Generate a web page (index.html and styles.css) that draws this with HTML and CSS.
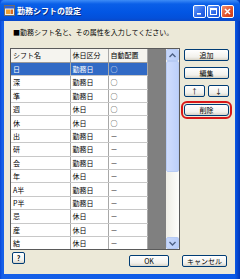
FILE: index.html
```html
<!DOCTYPE html>
<html lang="ja">
<head>
  <meta charset="UTF-8" />
  <title>勤務シフトの設定</title>
  <link rel="stylesheet" href="styles.css">
</head>
<body>
  <div class="window">
    <div class="titlebar">
      <svg class="app-icon" width="11" height="11" viewBox="0 0 11 11">
        <rect x="0.5" y="0.5" width="10" height="10" fill="#f4f1e4" stroke="#6b6b6b"/>
        <rect x="1" y="1" width="9" height="2.5" fill="#2d62d8"/>
        <rect x="2" y="4.5" width="4" height="4.5" fill="#f0a030"/>
        <rect x="6.5" y="4.5" width="2.5" height="4.5" fill="#d86a20"/>
      </svg>
      <span class="title">勤務シフトの設定</span>
      <div class="caption-btns">
        <span class="cap-btn"><svg width="11" height="11" viewBox="0 0 11 11"><rect x="3" y="7" width="4" height="1.6" fill="#fff"/></svg></span>
        <span class="cap-btn"><svg width="11" height="11" viewBox="0 0 11 11"><rect x="2.5" y="2.5" width="6" height="6" fill="none" stroke="#fff" stroke-width="1"/><rect x="2.5" y="2.5" width="6" height="1.6" fill="#fff"/></svg></span>
        <span class="cap-btn close"><svg width="11" height="11" viewBox="0 0 11 11"><path d="M3 3 L8 8 M8 3 L3 8" stroke="#fff" stroke-width="1.5"/></svg></span>
      </div>
    </div>

    <div class="body">
      <p class="prompt">■勤務シフト名と、その属性を入力してください。</p>

      <div class="main">
        <div class="grid">
          <div class="cells">
            <table class="shifts">
              <thead>
                <tr><th class="c1">シフト名</th><th class="c2">休日区分</th><th class="c3">自動配置</th></tr>
              </thead>
              <tbody>
                <tr class="selected"><td>日</td><td>勤務日</td><td>○</td></tr>
                <tr><td>深</td><td>勤務日</td><td>○</td></tr>
                <tr><td>準</td><td>勤務日</td><td>○</td></tr>
                <tr><td>週</td><td>休日</td><td>○</td></tr>
                <tr><td>休</td><td>休日</td><td>○</td></tr>
                <tr><td>出</td><td>勤務日</td><td>－</td></tr>
                <tr><td>研</td><td>勤務日</td><td>－</td></tr>
                <tr><td>会</td><td>勤務日</td><td>－</td></tr>
                <tr><td>年</td><td>休日</td><td>－</td></tr>
                <tr><td>A半</td><td>勤務日</td><td>－</td></tr>
                <tr><td>P半</td><td>勤務日</td><td>－</td></tr>
                <tr><td>忌</td><td>休日</td><td>－</td></tr>
                <tr><td>産</td><td>休日</td><td>－</td></tr>
                <tr><td>結</td><td>休日</td><td>－</td></tr>
              </tbody>
            </table>
          </div>
          <div class="scrollbar">
            <span class="sb-btn"><svg width="7" height="5" viewBox="0 0 7 5"><path d="M0.5 4 L3.5 1 L6.5 4" fill="none" stroke="#4d6185" stroke-width="1.4"/></svg></span>
            <span class="sb-thumb"></span>
            <span class="sb-track"></span>
            <span class="sb-btn"><svg width="7" height="5" viewBox="0 0 7 5"><path d="M0.5 1 L3.5 4 L6.5 1" fill="none" stroke="#4d6185" stroke-width="1.4"/></svg></span>
          </div>
        </div>

        <div class="side">
          <button type="button" class="btn">追加</button>
          <button type="button" class="btn">編集</button>
          <div class="arrows">
            <button type="button" class="btn small">↑</button>
            <button type="button" class="btn small">↓</button>
          </div>
          <button type="button" class="btn marked">削除</button>
        </div>
      </div>

      <div class="footer">
        <button type="button" class="btn help">?</button>
        <div class="actions">
          <button type="button" class="btn ok">OK</button>
          <button type="button" class="btn cancel">キャンセル</button>
        </div>
      </div>
    </div>
  </div>
</body>
</html>
```

FILE: styles.css
```css
body {
  margin: 0;
  font-family: "Noto Sans CJK JP", "Noto Sans", sans-serif;
  background: #fff;
}

.window {
  width: 240px;
  height: 279px;
  display: flex;
  flex-direction: column;
  background: linear-gradient(90deg, #0846d8 0, #1660e8 2px, #0a58e6 235px, #0036b8 240px);
  box-sizing: border-box;
}

.titlebar {
  height: 21px;
  display: flex;
  align-items: center;
  padding: 0 6px 0 4px;
  background: linear-gradient(#3d8cf6 0, #0a5fe8 4px, #0256e4 12px, #0350da 18px, #0a48c8 21px);
  border-radius: 5px 5px 0 0;
}

.app-icon {
  margin-right: 2px;
}

.title {
  color: #fff;
  font-weight: bold;
  font-size: 8px;
  line-height: 10px;
  text-shadow: 1px 1px 0 #0a2a80;
  flex: 1;
}

.caption-btns {
  display: flex;
  gap: 1px;
  margin-top: 1px;
}

.cap-btn {
  width: 11px;
  height: 11px;
  border: 1px solid #fff;
  border-radius: 2px;
  background: linear-gradient(135deg, #6a9ef8, #2a66e8 60%, #1a54d8);
  display: flex;
}

.cap-btn.close {
  background: linear-gradient(135deg, #f09070, #e0502a 60%, #c83a18);
}

.body {
  flex: 1;
  margin: 0 5px 5px 4px;
  background: #ece9d8;
  display: flex;
  flex-direction: column;
}

.prompt {
  margin: 0;
  height: 27px;
  box-sizing: border-box;
  padding: 6px 0 0 9px;
  font-size: 7px;
  line-height: 10px;
  color: #000;
}

.main {
  display: flex;
  padding-left: 6px;
}

.grid {
  width: 170px;
  height: 202px;
  box-sizing: border-box;
  border: 1px solid #5a5a5a;
  display: flex;
  overflow: hidden;
}

.cells {
  flex: 1;
  background: #808080;
  overflow: hidden;
}

.shifts {
  border-collapse: collapse;
  table-layout: fixed;
  width: 136px;
  font-size: 7px;
}

.shifts th,
.shifts td {
  height: 13.4px;
  padding: 0 0 0 2px;
  border-right: 1px solid #a8a8a8;
  border-bottom: 1px solid #c8c8c8;
  text-align: left;
  font-weight: normal;
  white-space: nowrap;
  overflow: hidden;
  box-sizing: border-box;
  line-height: 12px;
  color: #000;
}

.shifts td {
  background: #fff;
}

.shifts th {
  background: #f5f4ef;
  border-bottom-color: #9a9a9a;
}

.shifts .c1 { width: 59px; }
.shifts .c2 { width: 38px; }
.shifts .c3 { width: 39px; }

.shifts tr.selected td {
  background: #316ac5;
  color: #fff;
}

.scrollbar {
  width: 13px;
  display: flex;
  flex-direction: column;
  background: #f4f3ee;
}

.sb-btn {
  height: 12px;
  box-sizing: border-box;
  border: 1px solid #b7cbf4;
  border-radius: 2px;
  background: linear-gradient(90deg, #c8d8fb, #b8cdf8);
  display: flex;
  align-items: center;
  justify-content: center;
}

.sb-thumb {
  height: 111px;
  box-sizing: border-box;
  border: 1px solid #b7cbf4;
  border-radius: 2px;
  background: linear-gradient(90deg, #cfdcfc, #bdd0fa);
}

.sb-track {
  flex: 1;
  background: linear-gradient(90deg, #eeede5, #fefefb);
}

.side {
  margin-left: 4px;
  padding-top: 1px;
  width: 45px;
  display: flex;
  flex-direction: column;
  gap: 6px;
}

.btn {
  height: 12px;
  padding: 0;
  box-sizing: border-box;
  border: 1px solid #003c74;
  border-radius: 2px;
  background: linear-gradient(#ffffff, #f2f1ec 70%, #d8d4c8);
  font-family: "Noto Sans CJK JP", "Noto Sans", sans-serif;
  font-size: 7px;
  line-height: 10px;
  color: #000;
}

.arrows {
  display: flex;
  justify-content: space-between;
}

.btn.small {
  width: 21px;
}

.btn.marked {
  margin-top: 1px;
  outline: 2px solid #d81818;
  outline-offset: 1px;
  border-radius: 3px;
}

.footer {
  display: flex;
  align-items: flex-start;
  padding: 2px 0 0 8px;
}

.btn.help {
  width: 13px;
  font-weight: bold;
}

.actions {
  margin-left: auto;
  margin-right: 8px;
  margin-top: 3px;
  display: flex;
  gap: 13px;
}

.actions .ok {
  width: 40px;
}

.actions .cancel {
  width: 45px;
}
```
